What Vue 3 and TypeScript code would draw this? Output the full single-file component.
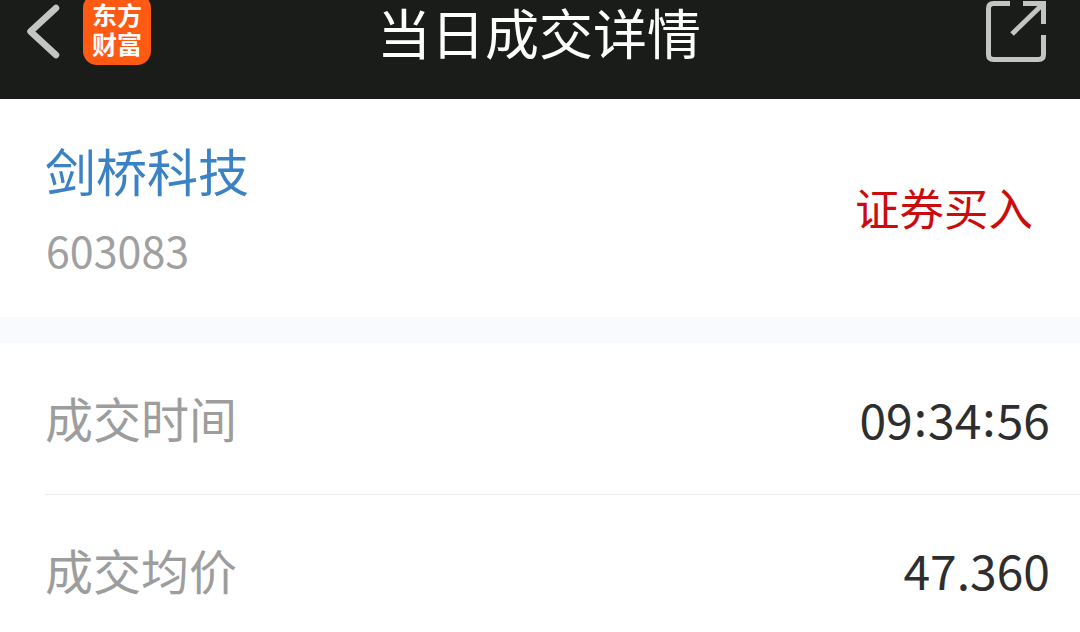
<template>
  <div class="page">
    <header class="topbar">
      <div class="left">
        <svg class="back" width="36" height="62" viewBox="0 0 36 62">
          <path d="M30 8 L4.5 31.5 L30 55" fill="none" stroke="#c4c4c4" stroke-width="6.5" stroke-linecap="round" stroke-linejoin="round" />
        </svg>
        <div class="logo">
          <span>东方</span>
          <span>财富</span>
        </div>
      </div>
      <div class="title">当日成交详情</div>
      <svg class="share" width="62" height="64" viewBox="0 0 62 64">
        <path d="M25 3.5 H8.5 Q3.5 3.5 3.5 8.5 V54.5 Q3.5 59.5 8.5 59.5 H53.5 Q58.5 59.5 58.5 54.5 V35" fill="none" stroke="#c4c4c4" stroke-width="5" />
        <path d="M38 3.5 H58.5 V24" fill="none" stroke="#c4c4c4" stroke-width="5" />
        <path d="M58 4 L27 34" fill="none" stroke="#c4c4c4" stroke-width="5" />
      </svg>
    </header>

    <section class="stock">
      <div>
        <div class="name">剑桥科技</div>
        <div class="code">603083</div>
      </div>
      <div class="side">证券买入</div>
    </section>

    <div class="divider"></div>

    <section class="rows">
      <div v-for="row in rows" :key="row.label" class="row">
        <span class="label">{{ row.label }}</span>
        <span class="value">
          <template v-for="(part, i) in row.value.split(':')" :key="i">
            <span v-if="i > 0" class="colon">:</span>{{ part }}
          </template>
        </span>
      </div>
    </section>
  </div>
</template>

<script setup lang="ts">
// Detail rows
const rows: { label: string; value: string }[] = [
  { label: "成交时间", value: "09:34:56" },
  { label: "成交均价", value: "47.360" },
];
</script>

<style>
html,
body {
  margin: 0;
  background: #fff;
  overflow: hidden;
}
</style>

<style scoped>
.page {
  width: 1080px;
  height: 632px;
  overflow: hidden;
  background: #fff;
  font-family: "Noto Sans CJK SC", sans-serif;
}

.topbar {
  height: 99px;
  background: #1a1c1a;
  display: flex;
  align-items: flex-start;
  justify-content: space-between;
  position: relative;
  padding: 0 33px 0 26px;
  box-sizing: border-box;
}

.left {
  display: flex;
  align-items: flex-start;
}

.logo {
  width: 68px;
  height: 71px;
  margin-top: -6px;
  margin-left: 21px;
  background: #ff5a13;
  border-radius: 14px;
  color: #fff;
  font-size: 25px;
  font-weight: 700;
  line-height: 29px;
  text-align: center;
  display: flex;
  flex-direction: column;
  padding-top: 6px;
  box-sizing: border-box;
}

.title {
  position: absolute;
  left: 0;
  right: 2px;
  top: 1px;
  text-align: center;
  color: #fff;
  font-size: 54px;
  line-height: 62px;
}

.stock {
  height: 218px;
  padding: 43px 47px 0 45px;
  box-sizing: border-box;
  display: flex;
  justify-content: space-between;
  align-items: flex-start;
}

.name {
  color: #3a82c4;
  font-size: 51px;
  line-height: 56px;
}

.code {
  color: #a0a0a0;
  font-size: 43px;
  line-height: 48px;
  margin-top: 27px;
  margin-left: 1px;
}

.side {
  color: #cc0c0c;
  font-size: 44.5px;
  line-height: 52px;
  margin-top: 39px;
}

.divider {
  height: 26px;
  background: #f8fafe;
}

.row {
  height: 147px;
  padding-bottom: 4px;
  margin-left: 45px;
  padding-right: 30px;
  display: flex;
  justify-content: space-between;
  align-items: center;
  border-bottom: 1px solid #eeeeee;
}

.label {
  color: #9d9d9d;
  font-size: 48px;
}

.value {
  color: #2e2e2e;
  font-size: 48px;
}

.colon {
  vertical-align: 3px;
  margin: 0 1px;
}
</style>
